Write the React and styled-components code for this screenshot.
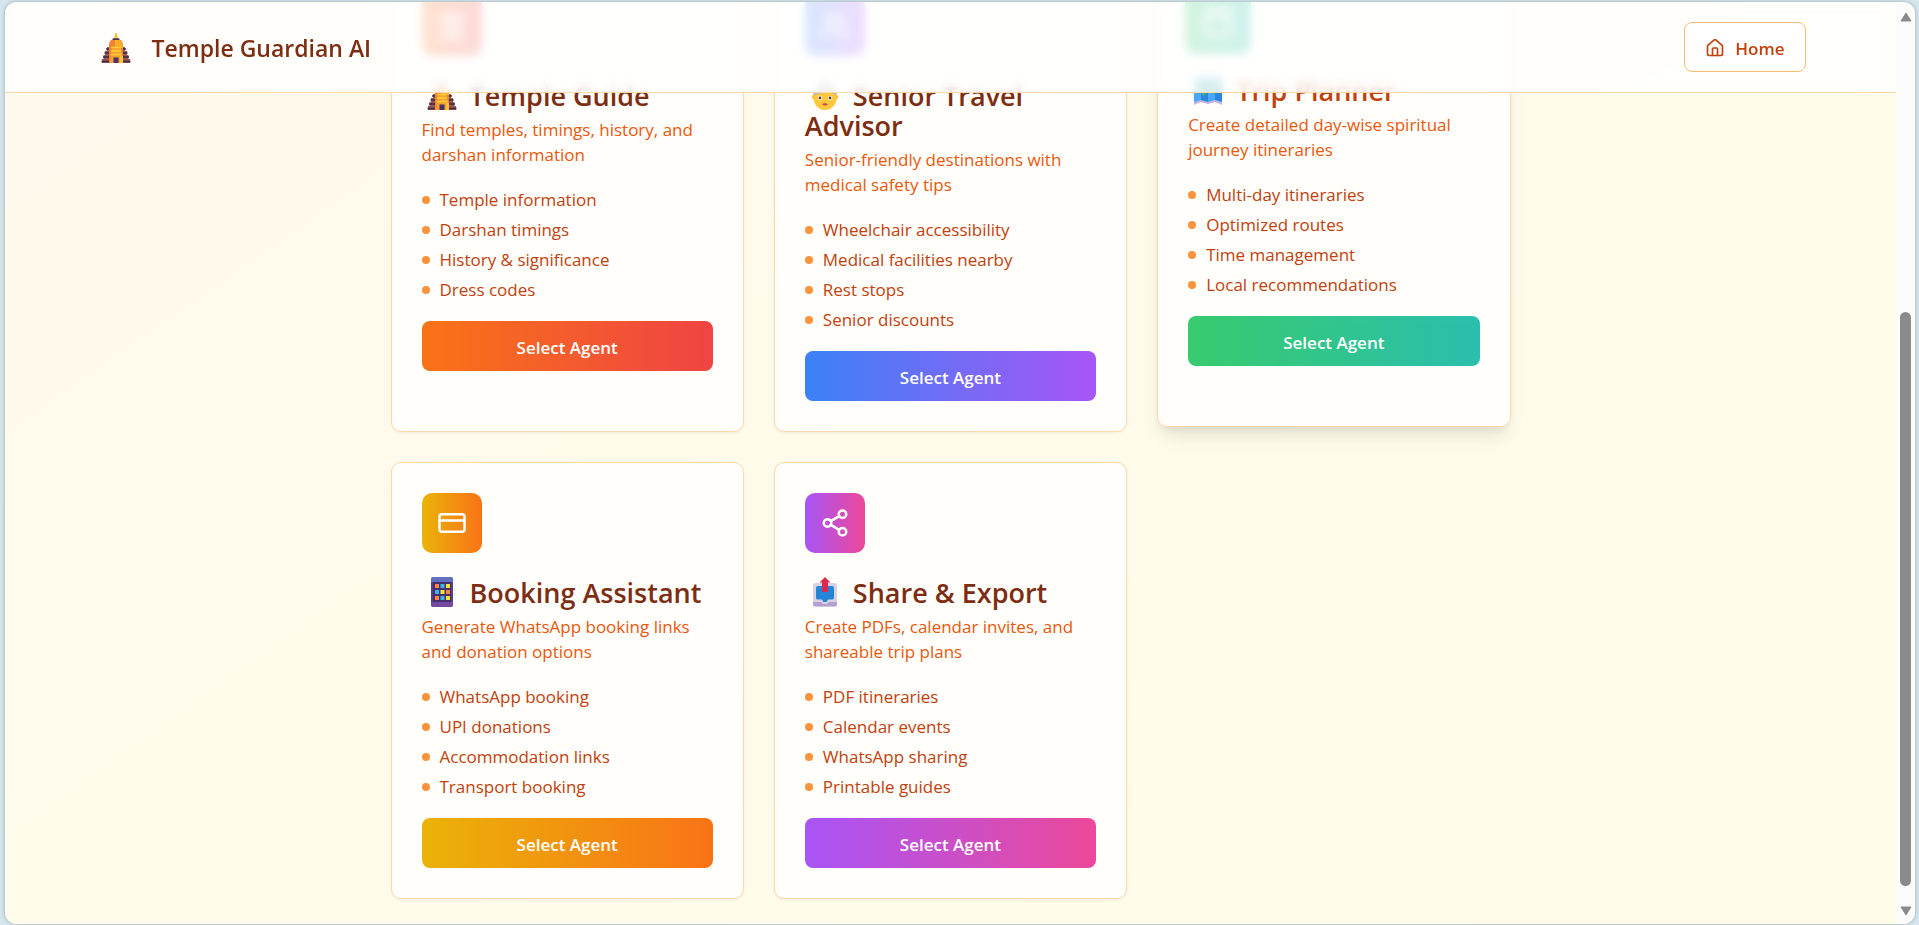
import { useLayoutEffect, useRef } from "react";
import styled, { createGlobalStyle } from "styled-components";
import { House, CreditCard, Share2, Landmark, Users, Calendar } from "lucide-react";

const agents = [
  {
    id: "guide",
    emoji: "temple",
    name: "Temple Guide",
    desc: "Find temples, timings, history, and darshan information",
    features: ["Temple information", "Darshan timings", "History & significance", "Dress codes"],
    from: "#f97316",
    to: "#ef4444",
    Icon: Landmark,
  },
  {
    id: "senior",
    emoji: "elder",
    name: "Senior Travel Advisor",
    desc: "Senior-friendly destinations with medical safety tips",
    features: ["Wheelchair accessibility", "Medical facilities nearby", "Rest stops", "Senior discounts"],
    from: "#3b82f6",
    to: "#a855f7",
    Icon: Users,
  },
  {
    id: "planner",
    emoji: "map",
    name: "Trip Planner",
    desc: "Create detailed day-wise spiritual journey itineraries",
    features: ["Multi-day itineraries", "Optimized routes", "Time management", "Local recommendations"],
    from: "#22c55e",
    to: "#14b8a6",
    Icon: Calendar,
    active: true,
  },
  {
    id: "booking",
    emoji: "phone",
    name: "Booking Assistant",
    desc: "Generate WhatsApp booking links and donation options",
    features: ["WhatsApp booking", "UPI donations", "Accommodation links", "Transport booking"],
    from: "#eab308",
    to: "#f97316",
    Icon: CreditCard,
  },
  {
    id: "share",
    emoji: "outbox",
    name: "Share & Export",
    desc: "Create PDFs, calendar invites, and shareable trip plans",
    features: ["PDF itineraries", "Calendar events", "WhatsApp sharing", "Printable guides"],
    from: "#a855f7",
    to: "#ec4899",
    Icon: Share2,
  },
];

const drawings = {
  temple: (
    <>
      <path d="M6 14h18v4h2v4h1.500v4H29v4H1v-4h1.500v-4H4v-4h2z" fill="#9a5650" />
      <path d="M5 16h20M3.500 20h23M2 24h26M0.500 28.500h29" stroke="#3b2a4a" strokeWidth="1.400" />
      <path d="M8 30V12q0-3.500 3-5.500h8q3 2 3 5.500v18z" fill="#ef8330" />
      <path d="M14 7h5q3 2 3 5v3h-8z" fill="#fbab2c" />
      <path d="M11 15h9l2 15H9z" fill="#f7a02c" />
      <path d="M10 14.500h10M10 18h10M9.500 21.500h11" stroke="#ffd23c" strokeWidth="1.700" />
      <path d="M19 23h3v7h-3z" fill="#ffc530" />
      <path d="M15 0l1.500 5h-3z" fill="#fbc02d" stroke="#fbc02d" strokeWidth="0.800" />
      <rect x="11.500" y="5.200" width="7" height="1.800" rx="0.900" fill="#4a3050" />
      <rect x="12.500" y="24.500" width="5" height="5.500" fill="#49306b" />
    </>
  ),
  elder: (
    <>
      <circle cx="15" cy="7" r="7" fill="#c9c4cc" />
      <circle cx="4.500" cy="17" r="2.500" fill="#fcb92b" />
      <circle cx="25.500" cy="17" r="2.500" fill="#fcb92b" />
      <ellipse cx="15" cy="18" rx="11.500" ry="12" fill="#ffc83d" />
      <path d="M3 15Q4 5 15 5t12 10q-5-1-8-5-5 4-16 5z" fill="#b9b4c0" />
      <circle cx="10" cy="18" r="2.200" fill="#fff" />
      <circle cx="20" cy="18" r="2.200" fill="#fff" />
      <circle cx="10" cy="18" r="1.400" fill="#5b3a2c" />
      <circle cx="20" cy="18" r="1.400" fill="#5b3a2c" />
      <path d="M12 24q3 3 6 0-3-1.500-6 0z" fill="#d33b4d" />
    </>
  ),
  map: (
    <>
      <path d="M1 5l7-2 7 2 7-2 7 2v25l-7-3-7 2-7-2-7 3z" fill="#c3b3e0" />
      <path d="M1 4l7-2v23l-7 2z" fill="#49a9f8" />
      <path d="M8 2l7 2v23l-7-2z" fill="#2b86e0" />
      <path d="M15 4l7-2v23l-7 2z" fill="#49a9f8" />
      <path d="M22 2l7 2v23l-7-2z" fill="#2b86e0" />
      <path d="M4 8l5-2 4 3-2 5 2 5-3 2-2-6-4-3zM17 9l5-3 5 3-1 5-3-1-1 7-3-3z" fill="#3dbb62" />
    </>
  ),
  phone: (
    <>
      <rect x="4" y="0" width="22" height="30" rx="2.500" fill="#5a3f86" />
      <path d="M4 5V2.500Q4 0 6.500 0h17Q26 0 26 2.500V5z" fill="#636fc0" />
      <rect x="6" y="5" width="18" height="20" fill="#45306c" />
      <path d="M4 25h22v2.500q0 2.500-2.500 2.500h-17Q4 30 4 27.500z" fill="#744aa0" />
      <path d="M8 7h4v4H8zM19 13h4v4h-4zM8 19h4v4H8z" fill="#ff8340" />
      <path d="M13.500 7h4v4h-4zM8 13h4v4H8zM13.500 19h4v4h-4z" fill="#35b5f5" />
      <path d="M19 7h4v4h-4zM13.500 13h4v4h-4zM19 19h4v4h-4z" fill="#ffdf3d" />
    </>
  ),
  outbox: (
    <>
      <rect x="3" y="6" width="24" height="23.500" rx="2.500" fill="#d8d2e3" />
      <path d="M3 25h8l2 2h4l2-2h8v2q0 2.500-2.500 2.500h-19Q3 29.500 3 27z" fill="#b39fd0" />
      <path d="M8 9h14q2 0 2 2v10q0 1.500-2 1.500h-4L16.500 25h-3L12 22.500H8q-2 0-2-1.500V11q0-2 2-2z" fill="#2484d6" />
      <path d="M15 0l5.500 5.500H18V15h-6V5.500H9.500z" fill="#d9294f" />
    </>
  ),
};

function Emoji({ name }) {
  return (
    <EmojiSvg viewBox="-5 0 41 30" aria-hidden="true">
      {drawings[name]}
    </EmojiSvg>
  );
}

function AgentCard({ agent }) {
  const { Icon } = agent;

  return (
    <Card $active={agent.active}>
      <IconTile $from={agent.from} $to={agent.to} $active={agent.active}>
        <Icon size={30} />
      </IconTile>
      <CardTitle $active={agent.active}>
        <Emoji name={agent.emoji} /> {agent.name}
      </CardTitle>
      <CardDesc>{agent.desc}</CardDesc>
      <FeatureList>
        {agent.features.map((feature) => (
          <Feature key={feature}>{feature}</Feature>
        ))}
      </FeatureList>
      <SelectButton type="button" $from={agent.from} $to={agent.to} $active={agent.active}>
        Select Agent
      </SelectButton>
    </Card>
  );
}

const App = () => {
  const scroller = useRef(null);

  useLayoutEffect(() => {
    scroller.current.scrollTop = scroller.current.scrollHeight;
  }, []);

  return (
    <>
      <GlobalStyle />
      <Frame>
        <Scroller ref={scroller}>
          <Page>
            <Header>
              <HeaderInner>
                <Brand>
                  <Emoji name="temple" />
                  <BrandName>Temple Guardian AI</BrandName>
                </Brand>
                <HomeButton type="button">
                  <House size={20} />
                  Home
                </HomeButton>
              </HeaderInner>
            </Header>
            <Main>
              <AgentGrid>
                {agents.map((agent) => (
                  <AgentCard key={agent.id} agent={agent} />
                ))}
              </AgentGrid>
            </Main>
          </Page>
        </Scroller>
        <ScrollRail aria-hidden="true">
          <Arrow viewBox="0 0 12 10">
            <path d="M6 1L11 9H1z" />
          </Arrow>
          <Track>
            <Thumb />
          </Track>
          <Arrow viewBox="0 0 12 10">
            <path d="M1 1h10L6 9z" />
          </Arrow>
        </ScrollRail>
      </Frame>
    </>
  );
};

export default App;

const GlobalStyle = createGlobalStyle`
  * {
    box-sizing: border-box;
  }
  body {
    margin: 0;
    background: #d5e6ec;
    font-family: "Segoe UI", "Open Sans", "Noto Sans", sans-serif;
    font-size: 17px;
    line-height: 25px;
  }
  h1, h2, p, ul {
    margin: 0;
    padding: 0;
  }
  button {
    font: inherit;
    cursor: pointer;
  }
`;

const Frame = styled.div`
  display: flex;
  height: calc(100vh - 3px);
  margin: 2px 4px 1px 5px;
  overflow: hidden;
  border-radius: 12px;
  background: #fcfcfd;
  box-shadow: 0 0 4px rgba(60, 80, 90, 0.4);
`;

const Scroller = styled.div`
  flex: 1;
  min-width: 0;
  overflow-y: auto;
  scrollbar-width: none;
`;

const Page = styled.div`
  min-height: 100%;
  background: linear-gradient(to bottom right, #fff7ed, #fffbeb, #fefce8);
`;

const Header = styled.header`
  position: sticky;
  top: 0;
  z-index: 10;
  border-bottom: 1px solid #fed7aa;
  background: rgba(255, 255, 255, 0.8);
  backdrop-filter: blur(5px);
`;

const HeaderInner = styled.div`
  display: flex;
  align-items: center;
  justify-content: space-between;
  max-width: 1750px;
  margin: 0 auto;
  padding: 20px;
`;

const Brand = styled.div`
  display: flex;
  align-items: center;
  gap: 15px;
  padding-top: 2px;
`;

const BrandName = styled.h1`
  color: #7c2d12;
  font-size: 23px;
  font-weight: 600;
  line-height: 35px;
`;

const EmojiSvg = styled.svg`
  width: 41px;
  height: 30px;
  vertical-align: -4px;
`;

const HomeButton = styled.button`
  display: flex;
  align-items: center;
  gap: 10px;
  height: 50px;
  padding: 2px 20px 0;
  border: 1px solid #fdba74;
  border-radius: 8px;
  background: #fff;
  color: #c2410c;
  font-weight: 600;
`;

const Main = styled.main`
  max-width: 1160px;
  margin: 0 auto;
  padding: 313px 20px 25px;
`;

const AgentGrid = styled.div`
  display: grid;
  grid-template-columns: repeat(auto-fit, minmax(320px, 1fr));
  gap: 30px;
`;

const Card = styled.article`
  padding: 30px;
  border: 1px solid #fed7aa;
  border-radius: 10px;
  background: rgba(255, 255, 255, 0.8);
  box-shadow: ${({ $active }) =>
    $active
      ? "0 12px 18px -4px rgba(0, 0, 0, 0.1), 0 5px 8px -5px rgba(0, 0, 0, 0.1)"
      : "0 1px 3px rgba(0, 0, 0, 0.06)"};
  transform: ${({ $active }) => ($active ? "translateY(-5px)" : "none")};
`;

const IconTile = styled.div`
  display: flex;
  align-items: center;
  justify-content: center;
  width: 60px;
  height: 60px;
  margin-bottom: 24px;
  border-radius: 10px;
  background: linear-gradient(to right, ${({ $from }) => $from}, ${({ $to }) => $to});
  color: #fff;
  transform: ${({ $active }) => ($active ? "scale(1.1)" : "none")};
`;

const CardTitle = styled.h2`
  margin-bottom: 6px;
  color: ${({ $active }) => ($active ? "#c2410c" : "#7c2d12")};
  font-size: 27px;
  font-weight: 600;
  line-height: 30px;
`;

const CardDesc = styled.p`
  margin-bottom: 20px;
  color: #ea580c;
`;

const FeatureList = styled.ul`
  display: flex;
  flex-direction: column;
  gap: 5px;
  margin-bottom: 19px;
  list-style: none;
`;

const Feature = styled.li`
  display: flex;
  align-items: center;
  gap: 10px;
  color: #c2410c;

  &::before {
    content: "";
    width: 8px;
    height: 8px;
    border-radius: 50%;
    background: #fb923c;
  }
`;

const SelectButton = styled.button`
  display: block;
  width: 100%;
  height: 50px;
  padding: 2px 0 0;
  border: 0;
  border-radius: 8px;
  background: linear-gradient(to right, ${({ $from }) => $from}, ${({ $to }) => $to});
  color: #fff;
  font-weight: 600;
  opacity: ${({ $active }) => ($active ? 0.9 : 1)};
`;

const ScrollRail = styled.div`
  display: flex;
  flex-direction: column;
  align-items: center;
  gap: 20px;
  width: 19px;
  padding: 10px 0 8px;
  background: #fcfcfd;
`;

const Arrow = styled.svg`
  width: 12px;
  height: 10px;
  fill: #8a8a8a;
  stroke: #8a8a8a;
  stroke-width: 1px;
  stroke-linejoin: round;
`;

const Track = styled.div`
  display: flex;
  flex: 1;
  flex-direction: column;
  justify-content: flex-end;
`;

const Thumb = styled.div`
  width: 11px;
  height: 68%;
  border-radius: 6px;
  background: #8a8a8a;
`;
